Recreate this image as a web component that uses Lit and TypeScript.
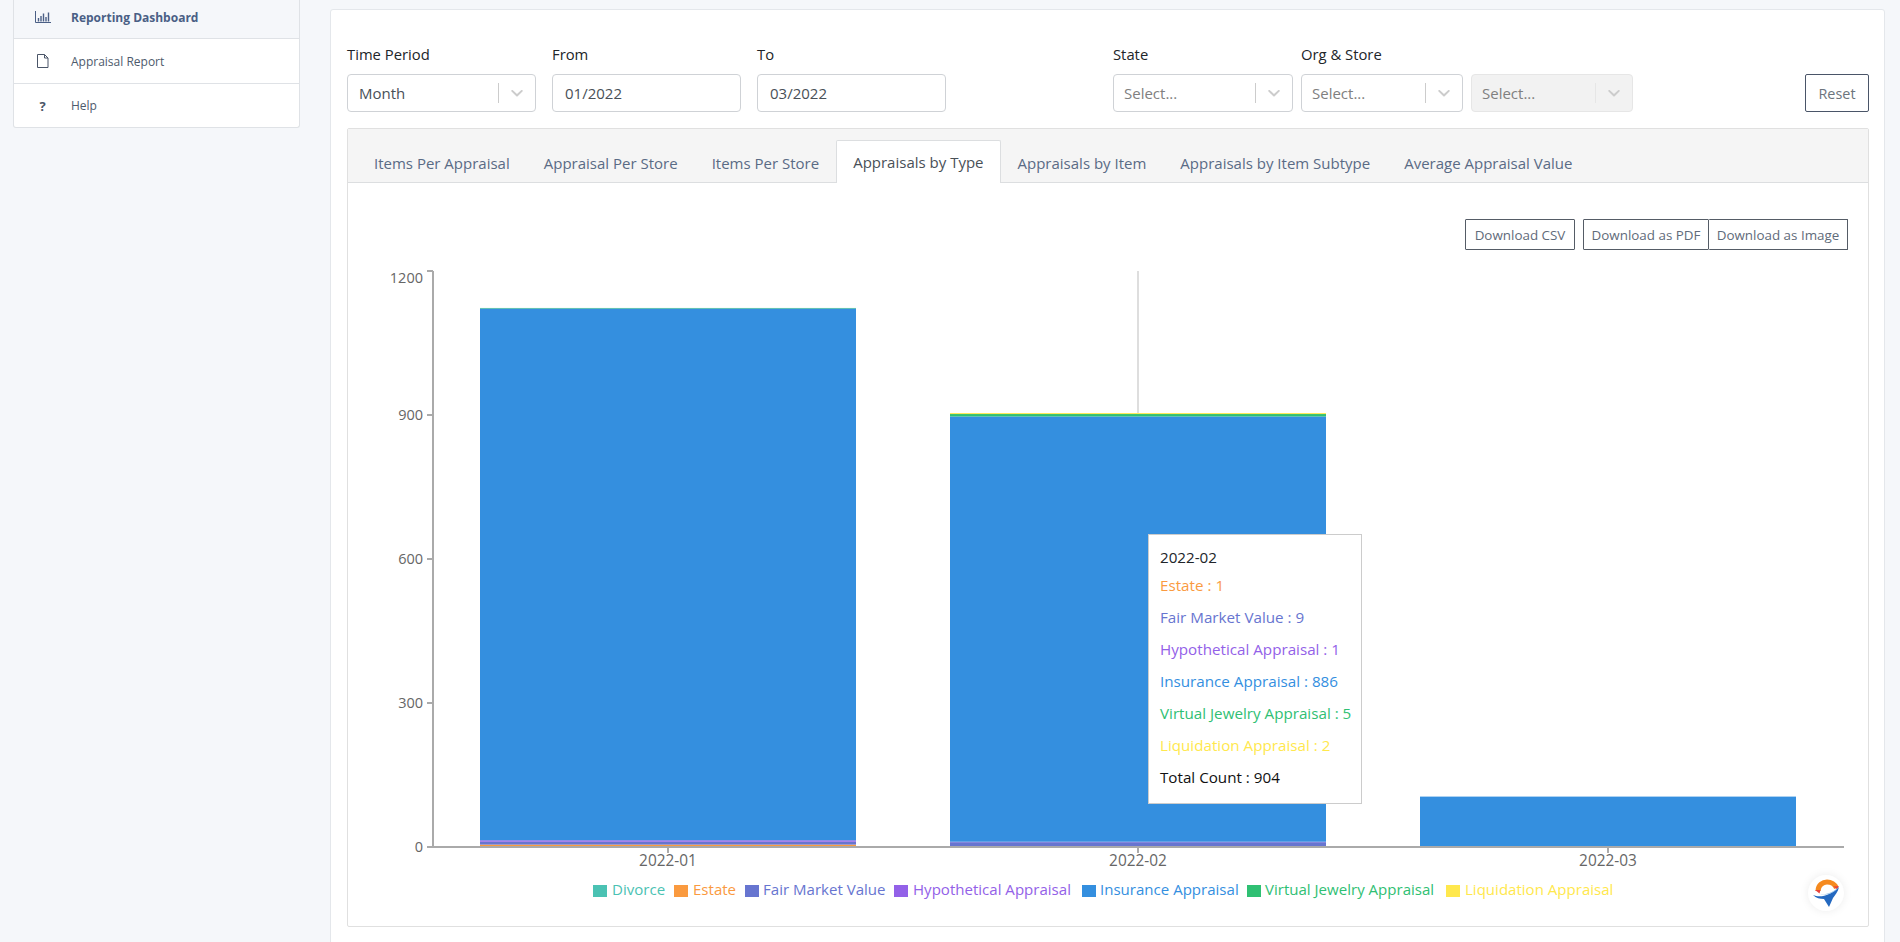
import { LitElement, html, svg, css } from "lit";
import { customElement, state } from "lit/decorators.js";

// chart geometry, in page pixels (the svg viewBox starts at the panel's corner)
const AXIS_X = 433;
const AXIS_RIGHT = 1845;
const ZERO_Y = 847;
const PX_PER_UNIT = 0.48;
const BAR_WIDTH = 376;

const SERIES = [
  { name: "Divorce", color: "#4bc2b3", swatch: 593, text: 612 },
  { name: "Estate", color: "#fa9a3f", swatch: 674, text: 693 },
  { name: "Fair Market Value", color: "#6775d0", swatch: 745, text: 763 },
  { name: "Hypothetical Appraisal", color: "#9361e8", swatch: 894, text: 913 },
  { name: "Insurance Appraisal", color: "#348fdf", swatch: 1082, text: 1100 },
  { name: "Virtual Jewelry Appraisal", color: "#2fc073", swatch: 1247, text: 1265 },
  { name: "Liquidation Appraisal", color: "#ffe84d", swatch: 1446, text: 1465 },
];

const BARS = [
  { label: "2022-01", center: 668, values: [0, 5, 6, 3, 1108, 1, 0] },
  { label: "2022-02", center: 1138, values: [0, 1, 9, 1, 886, 5, 2] },
  { label: "2022-03", center: 1608, values: [0, 0, 0, 0, 105, 0, 0] },
];

const TABS = [
  "Items Per Appraisal",
  "Appraisal Per Store",
  "Items Per Store",
  "Appraisals by Type",
  "Appraisals by Item",
  "Appraisals by Item Subtype",
  "Average Appraisal Value",
];

const chevron = html`<svg class="chev" viewBox="0 0 20 20" width="20" height="20">
  <path
    fill="currentColor"
    d="M4.5 7.2c.4-.4 1-.4 1.4 0L10 11.1l4.1-3.9c.4-.4 1-.4 1.4 0 .4.4.4 1 0 1.4l-4.8 4.6c-.4.4-1 .4-1.4 0L4.5 8.6c-.4-.4-.4-1 0-1.4z"
  />
</svg>`;

@customElement("app-root")
export class AppRoot extends LitElement {
  @state() active = 3;

  static styles = css`
    :host {
      display: flex;
      height: 942px;
      overflow: hidden;
      background: #f5f7fa;
      font-family: "Open Sans", sans-serif;
      color: #212529;
      font-size: 14px;
    }
    .side {
      flex: none;
      width: 287px;
      margin-left: 13px;
      align-self: flex-start;
      background: #fff;
      border: 1px solid #dfe2e6;
      border-top: 0;
      border-radius: 0 0 3px 3px;
      box-sizing: border-box;
      font-size: 12px;
      color: #4d5a6c;
    }
    .nav {
      display: flex;
      align-items: center;
      height: 44px;
      border-bottom: 1px solid #dfe2e6;
    }
    .nav:last-child {
      height: 43px;
      border-bottom: 0;
    }
    .nav.on {
      height: 39px;
      padding-bottom: 4px;
      box-sizing: border-box;
      background: #f5f7fa;
      font-weight: 700;
      color: #4a5f85;
    }
    .ic {
      flex: none;
      width: 57px;
      display: flex;
      justify-content: center;
      color: #4a5568;
    }
    .nav.on .ic {
      color: #4a5f85;
    }
    .q {
      font-weight: 700;
      font-size: 13px;
    }
    .main {
      flex: none;
      width: 1555px;
      margin: 9px 0 0 30px;
      height: 1000px;
      background: #fff;
      border: 1px solid #e4e7eb;
      border-radius: 3px;
      box-sizing: border-box;
      padding: 36px 15px 0 16px;
    }
    .filters {
      display: flex;
      align-items: flex-end;
      height: 66px;
    }
    .field {
      flex: none;
      display: flex;
      flex-direction: column;
      margin-right: 16px;
    }
    .field.tight {
      margin-right: 8px;
    }
    .gap {
      width: 151px;
      flex: none;
    }
    .field label {
      height: 29px;
      line-height: 18px;
      font-size: 14.8px;
      color: #212529;
      white-space: nowrap;
    }
    .w189 {
      width: 189px;
    }
    .w180 {
      width: 180px;
    }
    .w162 {
      width: 162px;
    }
    .box {
      display: flex;
      align-items: center;
      height: 38px;
      box-sizing: border-box;
      border: 1px solid #cfd2d6;
      border-radius: 4px;
      background: #fff;
      font-size: 15px;
      color: #495057;
      padding-left: 10px;
    }
    .box.input {
      padding-left: 12px;
    }
    .box .val {
      flex: 1;
      padding-left: 1px;
    }
    .box .ph {
      flex: 1;
      color: #808080;
    }
    .box .sep {
      width: 1px;
      height: 20px;
      background: #ccc;
    }
    .chev {
      color: #ccc;
      padding: 0 8px;
      flex: none;
    }
    .box.off {
      background: #f2f2f2;
      border-color: #e6e6e6;
    }
    .box.off .sep {
      background: #e6e6e6;
    }
    .reset {
      margin-left: auto;
      width: 64px;
      height: 38px;
      box-sizing: border-box;
      border: 1px solid #4a5568;
      border-radius: 2px;
      background: #fff;
      color: #6c757d;
      font: 14.4px "Open Sans", sans-serif;
      padding: 0;
    }
    .panel {
      margin-top: 16px;
      height: 799px;
      border: 1px solid #e0e0e0;
      border-radius: 2px;
      box-sizing: border-box;
    }
    .tabs {
      display: flex;
      height: 54px;
      align-items: flex-end;
      background: #f5f5f5;
      border-bottom: 1px solid #dcdee0;
      box-sizing: border-box;
      padding-left: 9px;
    }
    .tab {
      height: 42px;
      box-sizing: border-box;
      margin-bottom: -1px;
      padding: 0 16px;
      display: flex;
      align-items: center;
      border: 1px solid transparent;
      border-bottom: 0;
      font-size: 15px;
      color: #5a6b85;
      white-space: nowrap;
    }
    .tab.on {
      height: 43px;
      background: #fff;
      color: #495057;
      border-color: #dcdee0;
      border-radius: 2px 2px 0 0;
    }
    .tools {
      display: flex;
      justify-content: flex-end;
      padding: 36px 20px 1px 0;
      gap: 8px;
    }
    .btns {
      display: flex;
    }
    .btn {
      height: 31px;
      box-sizing: border-box;
      border: 1px solid #555c66;
      background: #fff;
      color: #5f6b7a;
      font: 13.4px "Open Sans", sans-serif;
      padding: 0;
      border-radius: 1px;
      white-space: nowrap;
    }
    .btns .btn + .btn {
      border-left: 0;
    }
    .chart {
      position: relative;
    }
    .chart svg.plot {
      display: block;
      font-family: "Open Sans", sans-serif;
    }
    .tooltip {
      position: absolute;
      left: 800px;
      top: 283px;
      width: 214px;
      height: 270px;
      box-sizing: border-box;
      border: 1px solid #ccc;
      background: #fff;
      padding: 6px 0 0 11px;
      font-size: 15.2px;
      white-space: nowrap;
    }
    .tooltip div {
      height: 32px;
      line-height: 32px;
    }
    .tooltip .head {
      height: 28px;
      line-height: 32px;
      color: #212529;
    }
    .widget {
      position: absolute;
      left: 1460px;
      top: 624px;
      width: 36px;
      height: 36px;
      border-radius: 50%;
      background: #fff;
      box-shadow: 0 0 10px rgba(0, 0, 0, 0.08);
    }
    .widget svg {
      display: block;
    }
  `;

  renderBar(bar: (typeof BARS)[number]) {
    let y = ZERO_Y;
    const x = bar.center - BAR_WIDTH / 2;
    return bar.values.map((v, i) => {
      const h = v * PX_PER_UNIT;
      y -= h;
      return v
        ? svg`<rect x=${x} y=${y} width=${BAR_WIDTH} height=${h} fill=${SERIES[i].color}></rect>`
        : null;
    });
  }

  renderChart() {
    const ticks = [0, 300, 600, 900, 1200];
    return svg`<svg class="plot" width="1520" height="675" viewBox="348 251 1520 675">
      ${BARS.map((b) => this.renderBar(b))}
      <rect x="1137" y="271" width="2" height="142" fill="#dedede"></rect>
      <rect x=${AXIS_X - 1} y="271" width="2" height="577" fill="#aaa"></rect>
      <rect x=${AXIS_X - 1} y="846" width=${AXIS_RIGHT - AXIS_X} height="2" fill="#aaa"></rect>
      ${ticks.map((t) => {
        const y = ZERO_Y - t * PX_PER_UNIT;
        return svg`
          <rect x="427" y=${t === 1200 ? 270 : y - 1} width="6" height="2" fill="#aaa"></rect>
          <text x="423" y=${y + (t === 1200 ? 12 : 5)} text-anchor="end" font-size="14.5" fill="#666">${t}</text>`;
      })}
      ${BARS.map(
        (b) => svg`
          <rect x=${b.center - 1} y="847" width="2" height="6" fill="#aaa"></rect>
          <text x=${b.center} y="865.5" text-anchor="middle" font-size="15.4" fill="#666">${b.label}</text>`
      )}
      ${SERIES.map(
        (s) => svg`
          <rect x=${s.swatch} y="885" width="14" height="12" fill=${s.color}></rect>
          <text x=${s.text} y="895" font-size="15.05" fill=${s.color}>${s.name}</text>`
      )}
    </svg>`;
  }

  render() {
    const feb = BARS[1];
    return html`
      <aside class="side">
        <div class="nav on">
          <span class="ic">
            <svg width="16" height="12" viewBox="0 0 16 12" fill="none" stroke="currentColor">
              <path d="M.5 0v11.5H16" />
              <path d="M3.5 10.5V7M6 10.5V5M8.5 10.5V2.5M11 10.5V6M13.500 10.5V1.5" stroke-width="1.4" />
            </svg>
          </span>
          Reporting Dashboard
        </div>
        <div class="nav">
          <span class="ic">
            <svg width="13" height="14" viewBox="0 0 13 14" fill="none" stroke="currentColor">
              <path d="M1.500.5h7l3.500 3.500v9.500h-10.500z" />
              <path d="M8.500.5v3.500h3.500" />
            </svg>
          </span>
          Appraisal Report
        </div>
        <div class="nav"><span class="ic q">?</span> Help</div>
      </aside>
      <main class="main">
        <div class="filters">
          <div class="field w189">
            <label>Time Period</label>
            <div class="box"><span class="val">Month</span><span class="sep"></span>${chevron}</div>
          </div>
          <div class="field w189">
            <label>From</label>
            <div class="box input">01/2022</div>
          </div>
          <div class="field w189">
            <label>To</label>
            <div class="box input">03/2022</div>
          </div>
          <div class="gap"></div>
          <div class="field w180 tight">
            <label>State</label>
            <div class="box"><span class="ph">Select...</span><span class="sep"></span>${chevron}</div>
          </div>
          <div class="field w162 tight">
            <label>Org &amp; Store</label>
            <div class="box"><span class="ph">Select...</span><span class="sep"></span>${chevron}</div>
          </div>
          <div class="field w162">
            <label>&nbsp;</label>
            <div class="box off"><span class="ph">Select...</span><span class="sep"></span>${chevron}</div>
          </div>
          <button class="reset">Reset</button>
        </div>
        <section class="panel">
          <div class="tabs">
            ${TABS.map(
              (t, i) => html`<div class="tab ${i === this.active ? "on" : ""}">${t}</div>`
            )}
          </div>
          <div class="tools">
            <button class="btn" style="width: 110px">Download CSV</button>
            <div class="btns">
              <button class="btn" style="width: 126px">Download as PDF</button>
              <button class="btn" style="width: 139px">Download as Image</button>
            </div>
          </div>
          <div class="chart">
            ${this.renderChart()}
            <div class="tooltip">
              <div class="head">${feb.label}</div>
              ${feb.values.map((v, i) =>
                v
                  ? html`<div style="color: ${SERIES[i].color}">${SERIES[i].name} : ${v}</div>`
                  : null
              )}
              <div style="color: #111">Total Count : 904</div>
            </div>
            <div class="widget">
              <svg width="36" height="36" viewBox="2 2 36 36">
                <path d="M12 18C12 12 17 9 21 9c4 0 8 2.500 9.500 6" fill="none" stroke="#f58a1f" stroke-width="5" />
                <path d="M9 17h5.500l-1 3.500zM27 13.500l5.500-.5-1 3.500z" fill="#e8443a" />
                <path d="M7 22c7 3 17 1 26-8-1 5-4 8-6 11l-4 9-5-8c-4 0-8-1-11-4z" fill="#2469c0" />
                <path d="M13 21c7 1 13-1 20-7-5 6-12 9-20 7z" fill="#8fc0ea" />
              </svg>
            </div>
          </div>
        </section>
      </main>
    `;
  }
}
